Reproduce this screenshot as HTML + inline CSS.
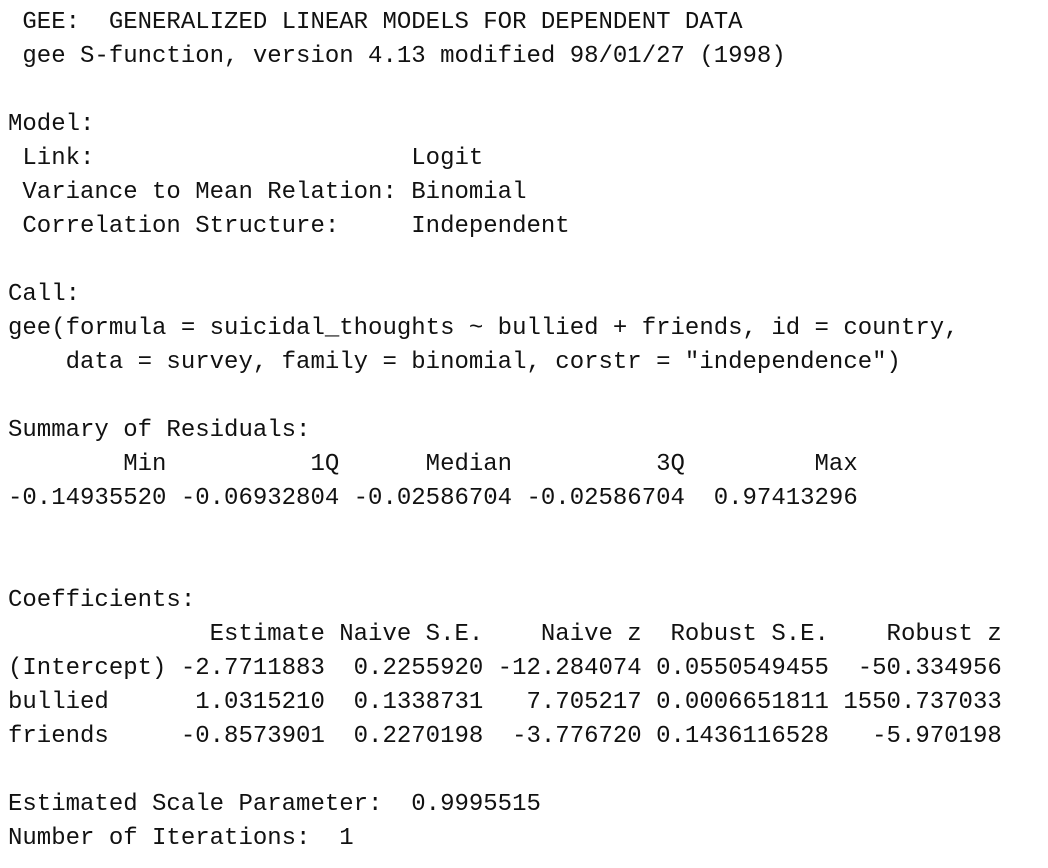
<!DOCTYPE html>
<html><head><meta charset="utf-8"><style>
html,body{margin:0;padding:0;background:#fff;width:1048px;height:868px;overflow:hidden}
pre{margin:0;padding:6px 0 0 8px;font-family:"Liberation Mono",monospace;font-size:24px;line-height:34px;color:#111}
</style></head><body><pre> GEE:  GENERALIZED LINEAR MODELS FOR DEPENDENT DATA
 gee S-function, version 4.13 modified 98/01/27 (1998)

Model:
 Link:                      Logit
 Variance to Mean Relation: Binomial
 Correlation Structure:     Independent

Call:
gee(formula = suicidal_thoughts ~ bullied + friends, id = country,
    data = survey, family = binomial, corstr = "independence")

Summary of Residuals:
        Min          1Q      Median          3Q         Max
-0.14935520 -0.06932804 -0.02586704 -0.02586704  0.97413296


Coefficients:
              Estimate Naive S.E.    Naive z  Robust S.E.    Robust z
(Intercept) -2.7711883  0.2255920 -12.284074 0.0550549455  -50.334956
bullied      1.0315210  0.1338731   7.705217 0.0006651811 1550.737033
friends     -0.8573901  0.2270198  -3.776720 0.1436116528   -5.970198

Estimated Scale Parameter:  0.9995515
Number of Iterations:  1
</pre></body></html>
